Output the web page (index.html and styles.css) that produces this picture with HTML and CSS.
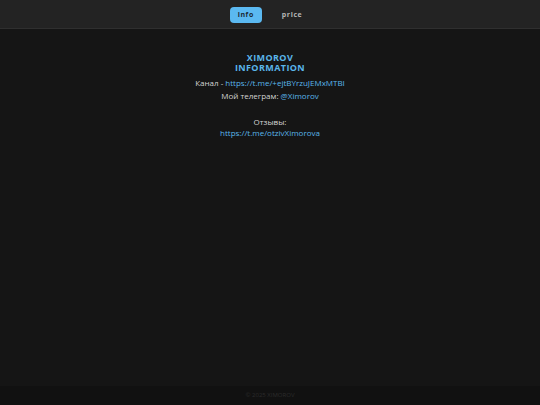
FILE: index.html
```html
<!DOCTYPE html>
<html lang="ru">
<head>
<meta charset="utf-8">
<title>XIMOROV</title>
<link rel="stylesheet" href="styles.css">
</head>
<body>
<div class="page">
  <header class="topbar">
    <nav class="tabs">
      <a class="tab active">info</a>
      <a class="tab">price</a>
    </nav>
  </header>
  <main class="content">
    <h1 class="title"><span class="title-line">XIMOROV</span><span class="title-line">INFORMATION</span></h1>
    <p class="line">Канал - <a class="link">https://t.me/+ejtBYrzuJEMxMTBI</a></p>
    <p class="line">Мой телеграм: <a class="link">@Ximorov</a></p>
    <p class="line reviews">Отзывы:<br><a class="link">https://t.me/otzivXimorova</a></p>
  </main>
  <footer class="footer">© 2025 XIMOROV</footer>
</div>
</body>
</html>
```
FILE: styles.css
```css
* { box-sizing: border-box; }
html, body { margin: 0; padding: 0; height: 100%; }
body {
  background: #151515;
  font-family: "Open Sans", "DejaVu Sans", sans-serif;
  color: #d4d4d4;
}
.page {
  min-height: 100%;
  display: flex;
  flex-direction: column;
}
.topbar {
  height: 29px;
  background: #232323;
  border-bottom: 1px solid #2f2f2f;
  display: flex;
  justify-content: center;
  align-items: center;
}
.tabs {
  display: flex;
  gap: 12px;
  align-items: center;
  margin-top: 1px;
}
.tab {
  font-size: 7px;
  line-height: 10px;
  font-weight: 700;
  letter-spacing: 0.6px;
  color: #b5b5b5;
  padding: 3px 8px;
  border-radius: 4px;
}
.tab.active {
  background: #5bb9f1;
  color: #1b2a36;
}
.content {
  flex: 1;
  text-align: center;
  padding-top: 24px;
}
.title {
  margin: 0 0 4px;
  font-size: 9px;
  font-weight: 700;
  color: #5ab5ea;
  letter-spacing: 0.4px;
}
.title-line {
  display: block;
  line-height: 10px;
}
.line {
  margin: 0 0 2px;
  font-size: 8px;
  line-height: 11px;
}
.reviews { margin-top: 15px; }
.link { color: #5ab5ea; }
.footer {
  height: 19px;
  background: #111111;
  color: #2c2c2c;
  font-size: 6px;
  text-align: center;
  line-height: 19px;
}
```
